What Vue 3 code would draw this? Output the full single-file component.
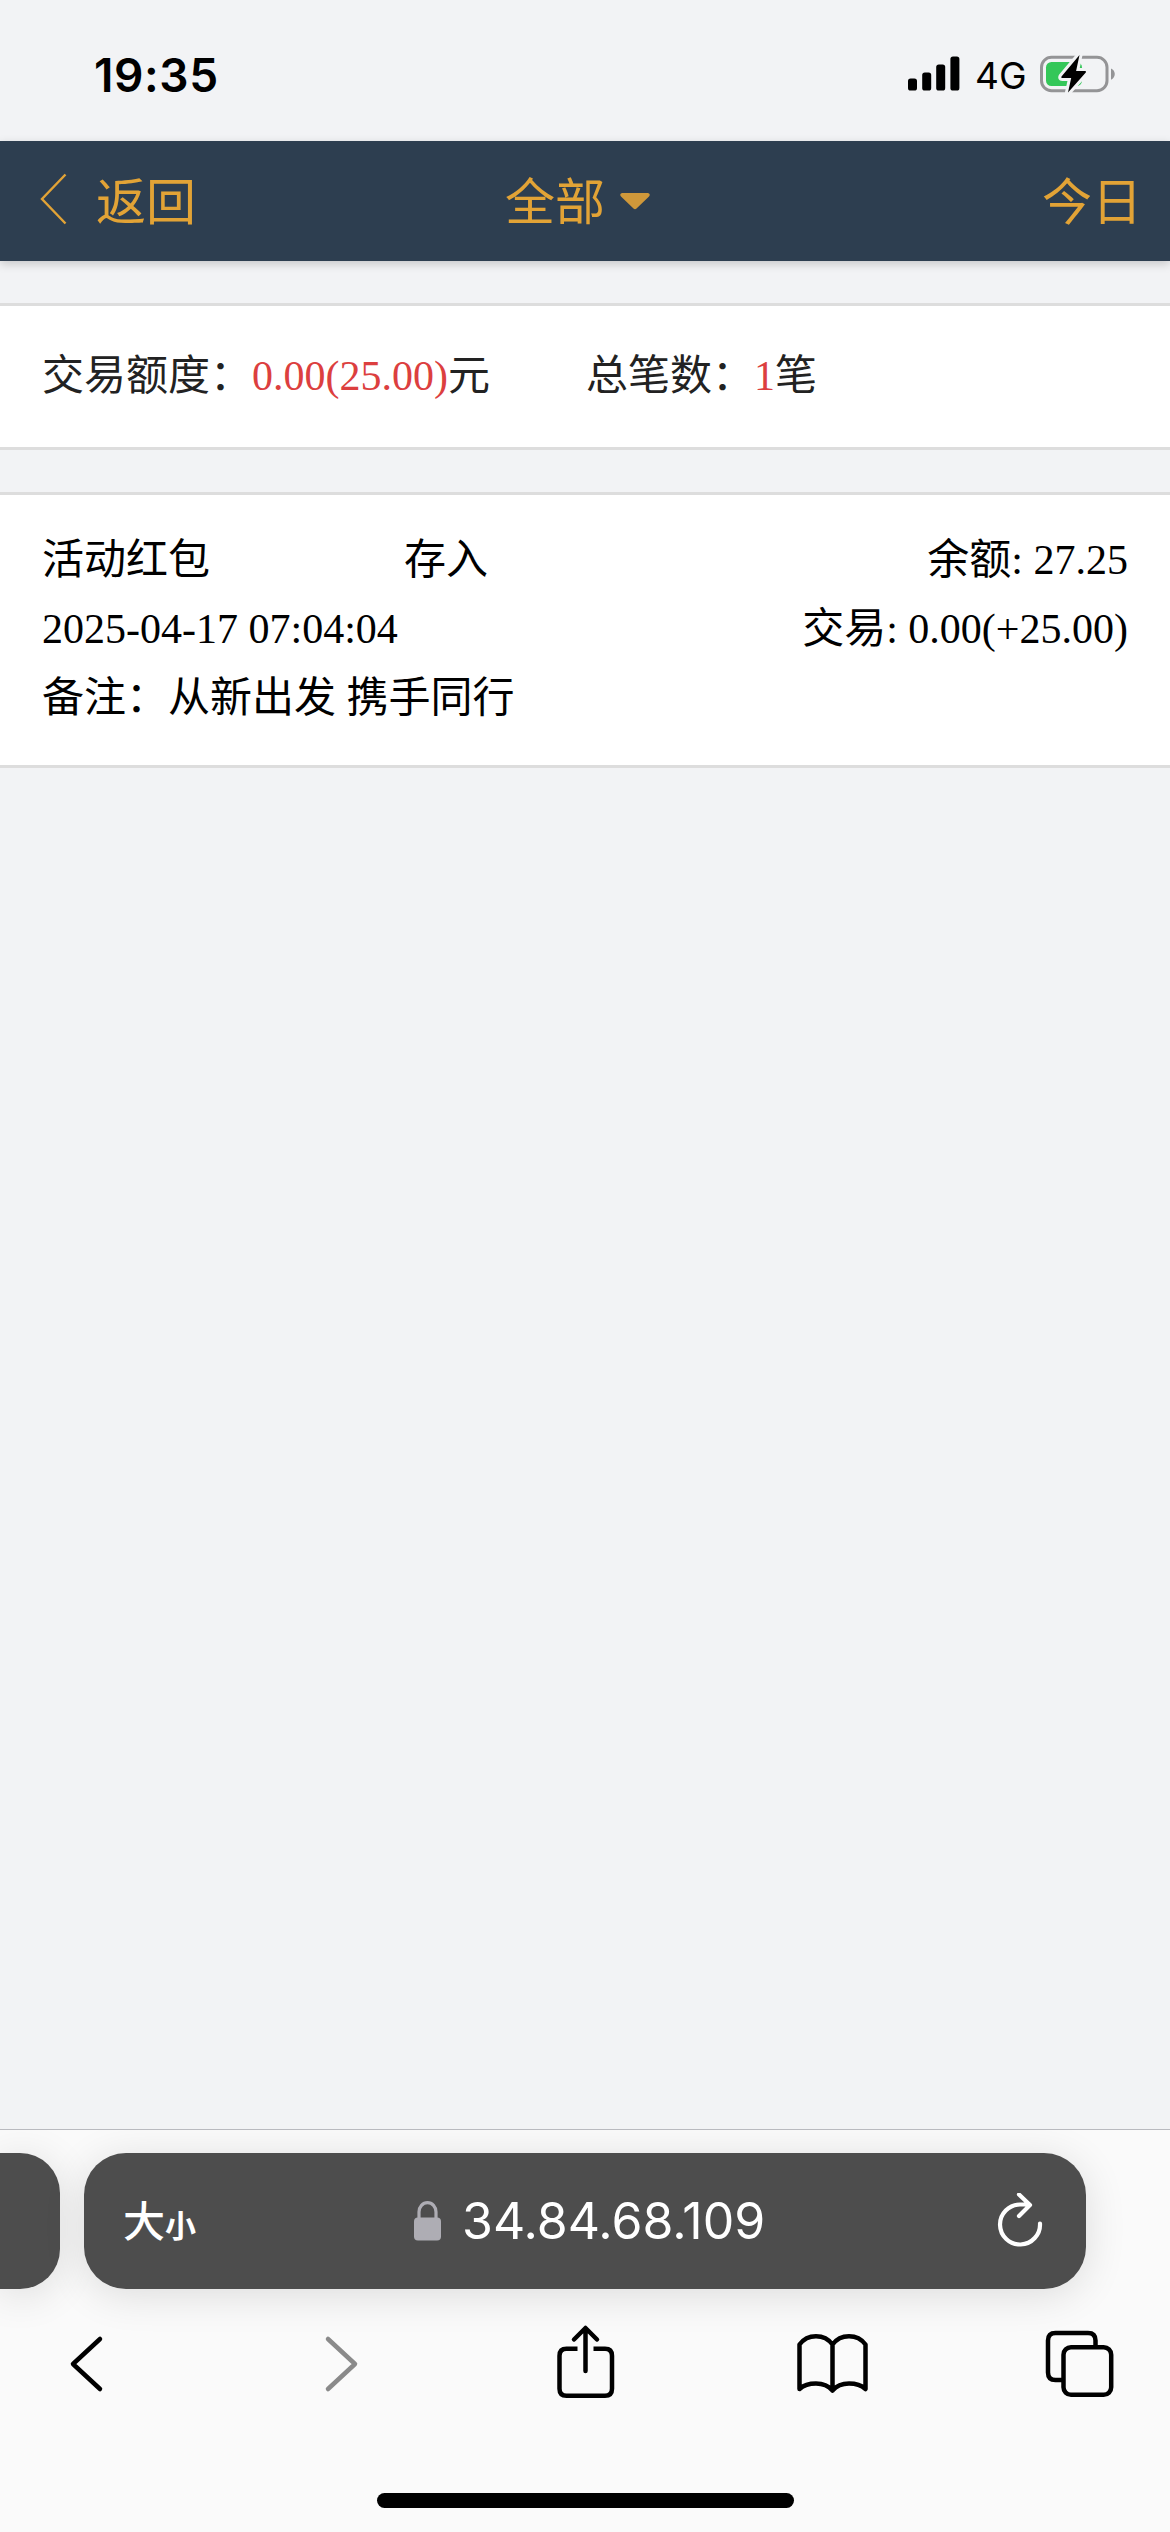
<template>
  <div class="screen">
    <div class="status-bar">
      <span class="clock">19:35</span>
      <div class="status-icons">
        <svg class="signal" width="52" height="38" viewBox="0 0 52 38">
          <rect x="0" y="24.5" width="9" height="12" rx="2.6" />
          <rect x="14.2" y="18.5" width="9" height="18" rx="2.6" />
          <rect x="28.2" y="10.5" width="9" height="26" rx="2.6" />
          <rect x="42.4" y="2.5" width="9" height="34" rx="2.6" />
        </svg>
        <span class="network">4G</span>
        <svg width="76" height="40" viewBox="0 0 76 40">
          <rect x="1.5" y="3.3" width="65.500" height="33.400" rx="10" fill="none" stroke="#949496" stroke-width="3" />
          <path d="M71 14.5c5 2.200 5 9 0 11.200z" fill="#949496" />
          <rect x="6" y="8" width="36" height="24" rx="5.500" fill="#34c759" />
          <path d="M39.500 1 21.500 22.500q-.8 1.500.7 1.500h9L28 38.500l17.800-20q.8-1.500-.7-1.500h-9L39.500 1z" fill="#000" stroke="#f2f3f5" stroke-width="6" paint-order="stroke" stroke-linejoin="round" />
        </svg>
      </div>
    </div>

    <header class="nav-bar">
      <div class="nav-back">
        <svg width="27" height="52" viewBox="0 0 27 52">
          <path d="M25.500 1.500 2 26l23.500 24.500" fill="none" stroke="#e2a336" stroke-width="2.400" />
        </svg>
        <span>返回</span>
      </div>
      <div class="nav-title">
        <span>全部</span>
        <svg width="30" height="17" viewBox="0 0 30 17">
          <path d="M2 0h26q3 1 1 3.500L16.500 15.500q-1.500 1.500-3 0L1 3.500Q-1 1 2 0z" fill="#cf983a" />
        </svg>
      </div>
      <div class="nav-date"><span>今日</span></div>
    </header>

    <section class="card summary">
      <div>交易额度：<em>{{ summary.amount }}</em>元</div>
      <div>总笔数：<em>{{ summary.count }}</em>笔</div>
    </section>

    <section v-for="item in records" :key="item.time" class="card record">
      <div class="row">
        <span class="type">{{ item.type }}</span>
        <span>{{ item.direction }}</span>
        <span class="right">余额: {{ item.balance }}</span>
      </div>
      <div class="row">
        <span>{{ item.time }}</span>
        <span class="right">交易: {{ item.change }}</span>
      </div>
      <div class="row">备注：{{ item.remark }}</div>
    </section>

    <footer class="browser">
      <div class="tabs">
        <div class="tab tab-prev"></div>
        <div class="tab tab-current">
          <span class="text-size">大<small>小</small></span>
          <div class="address">
            <svg width="27" height="40" viewBox="0 0 27 40">
              <path d="M5 18v-7a8.500 9.300 0 0 1 17 0v7" fill="none" stroke="#aeadb4" stroke-width="3.200" />
              <rect x="0" y="16.500" width="27" height="23" rx="4" fill="#aeadb4" />
            </svg>
            <span>34.84.68.109</span>
          </div>
          <svg class="reload" width="46" height="56" viewBox="0 0 46 56">
            <path d="M43 30.500A20 20 0 1 1 23 11.500h9.500M22 1.500 33 12 22 23" />
          </svg>
        </div>
      </div>

      <nav class="toolbar">
        <svg width="70" height="80" viewBox="0 0 70 80">
          <path d="M48 15 21 40l27 25" />
        </svg>
        <svg class="disabled" width="70" height="80" viewBox="0 0 70 80">
          <path d="M29 15l27 25-27 25" />
        </svg>
        <svg width="70" height="80" viewBox="-3.500 0 70 80">
          <path class="flat" d="M27 24.700H16q-7 0-7 7v33q0 7 7 7h38.500q7 0 7-7v-33q0-7-7-7H43" />
          <path d="M35 47V4.500M23.500 15.500 35 4l11.500 11.500" />
        </svg>
        <svg width="74" height="80" viewBox="-1.500 0 74 80">
          <path d="M37 20.500Q31 12.200 20.500 12.200T4 20.500V65Q10 59.600 20.500 59.600T37 66.500Q43 59.600 53.500 59.600T70 65V20.500Q64 12.200 53.500 12.200T37 20.500V66.500" />
        </svg>
        <svg width="70" height="80" viewBox="0 0 70 80">
          <path class="flat" d="M17 56h-6.500q-7.500 0-7.500-7.500v-32q0-7.500 7.500-7.500h32.500q7.500 0 7.500 7.500v6" />
          <rect x="18.500" y="23.200" width="47.700" height="47.600" rx="7.500" />
        </svg>
      </nav>
      <div class="home-indicator"></div>
    </footer>
  </div>
</template>

<script setup>
import { ref } from 'vue'

const summary = ref({ amount: '0.00(25.00)', count: 1 })

const records = ref([
  {
    type: '活动红包',
    direction: '存入',
    balance: '27.25',
    time: '2025-04-17 07:04:04',
    change: '0.00(+25.00)',
    remark: '从新出发 携手同行',
  },
])
</script>

<style>
body {
  margin: 0;
  background: #f2f3f5;
}
</style>

<style scoped>
.screen {
  display: flex;
  flex-direction: column;
  width: 1170px;
  height: 2532px;
  overflow: hidden;
  background: #f2f3f5;
  color: #000;
  font-family: 'Liberation Serif', 'Noto Sans CJK SC', serif;
  font-size: 42px;
}

.status-bar {
  display: flex;
  justify-content: space-between;
  box-sizing: border-box;
  height: 141px;
  padding: 54px 54px 0 94px;
  font-family: Inter, sans-serif;
}

.clock {
  font-size: 46px;
  font-weight: 600;
  line-height: 42px;
  letter-spacing: 0.6px;
}

.status-icons {
  display: flex;
  align-items: flex-start;
  height: 40px;
}

.network {
  width: 65px;
  margin-left: 15px;
  font-size: 37px;
  line-height: 44px;
}

.nav-bar {
  position: relative;
  z-index: 1;
  display: grid;
  grid-template-columns: 465px 1fr auto;
  align-items: center;
  height: 120px;
  padding: 0 28px 0 40px;
  background: #2d3e50;
  box-shadow: 0 3px 9px rgba(0, 0, 0, 0.18);
  color: #e2a336;
  font-family: 'Noto Sans CJK SC', sans-serif;
  font-size: 50px;
}

/* the glyphs sit slightly above the middle of the bar */
.nav-bar span {
  height: 120px;
  line-height: 114px;
}

.nav-back,
.nav-title,
.nav-date {
  display: flex;
  align-items: center;
}

.nav-back {
  gap: 29px;
}

.nav-back svg {
  margin-bottom: 4px;
}

.nav-title {
  gap: 15px;
}

.card {
  background: #fff;
  border-top: 3px solid #ddd;
  border-bottom: 3px solid #ddd;
}

.summary {
  display: grid;
  grid-template-columns: 544px 1fr;
  height: 141px;
  margin-top: 42px;
  padding: 0 42px;
  color: #222;
  line-height: 141px;
}

.summary em {
  color: #dc3f3f;
  font-style: normal;
}

.record {
  height: 207px;
  box-sizing: content-box;
  margin-top: 42px;
  padding: 30px 42px 33px;
}

.row {
  display: flex;
  height: 69px;
  line-height: 70px;
}

.type {
  width: 362px;
}

.right {
  margin-left: auto;
}

.browser {
  display: flex;
  flex-direction: column;
  align-items: center;
  box-sizing: border-box;
  height: 403px;
  margin-top: auto;
  padding-top: 23px;
  border-top: 1px solid #b9babf;
  background: #fafafa;
  overflow: hidden;
}

.tabs {
  display: flex;
  gap: 24px;
  width: 100%;
}

.tab {
  height: 136px;
  background: #4d4d4d;
  box-shadow: 0 6px 42px rgba(0, 0, 0, 0.12);
}

.tab-prev {
  width: 60px;
  border-radius: 0 40px 40px 0;
}

.tab-current {
  display: flex;
  align-items: center;
  box-sizing: border-box;
  width: 1002px;
  padding: 0 43px 0 39px;
  border-radius: 42px;
  color: #fff;
}

.text-size {
  width: 291px;
  padding-bottom: 5px;
  font-family: 'Noto Sans CJK SC', sans-serif;
  font-size: 42px;
  font-weight: 500;
}

.text-size small {
  font-size: 31px;
  font-weight: 700;
}

.address {
  display: flex;
  align-items: center;
  gap: 21px;
  font-family: Inter, sans-serif;
  font-size: 50px;
}

.reload {
  margin-left: auto;
  fill: none;
  stroke: #fff;
  stroke-width: 4.2;
  stroke-linecap: round;
  stroke-linejoin: round;
}

.toolbar {
  display: flex;
  justify-content: space-between;
  box-sizing: border-box;
  width: 100%;
  margin-top: 35px;
  padding: 0 55px 0 52px;
}

.toolbar svg {
  fill: none;
  stroke: #000;
  stroke-width: 4.5;
  stroke-linecap: round;
  stroke-linejoin: round;
}

.toolbar .disabled {
  stroke: #8a8a8a;
}

.toolbar .flat {
  stroke-linecap: butt;
}

.home-indicator {
  width: 417px;
  height: 15px;
  margin-top: 89px;
  border-radius: 8px;
  background: #000;
}
</style>
